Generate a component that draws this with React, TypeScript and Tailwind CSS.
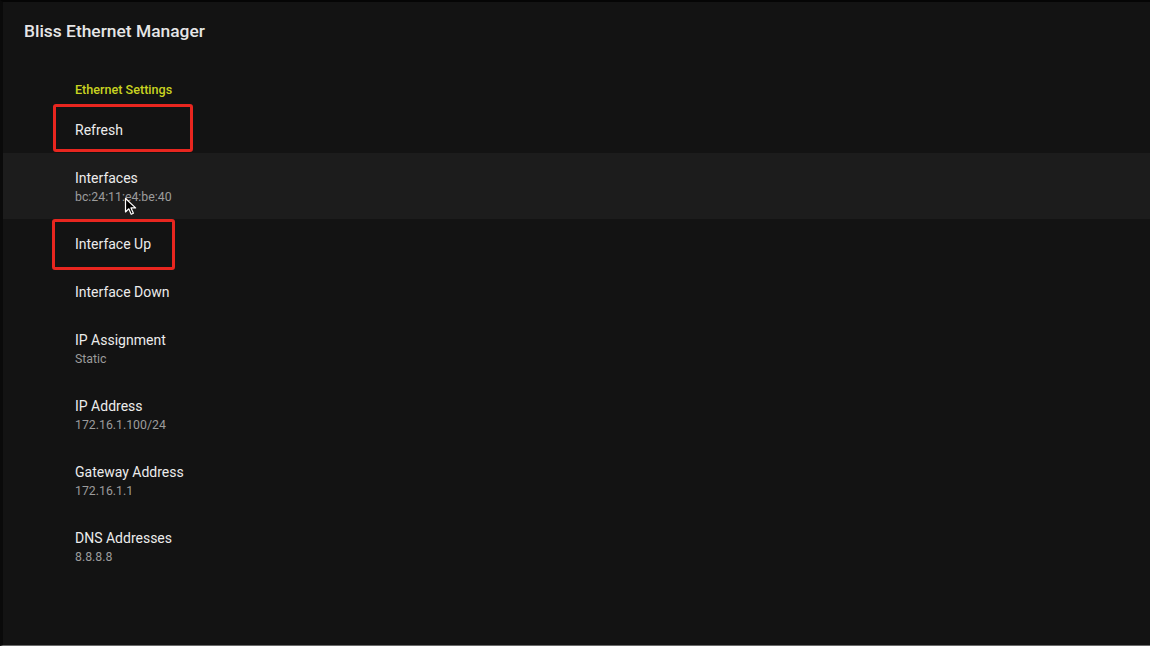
import React from 'react';

type Row = {
  title: string;
  subtitle?: string;
  highlight?: boolean;
  box?: 'refresh' | 'up';
};

const rows: Row[] = [
  { title: 'Refresh', box: 'refresh' },
  { title: 'Interfaces', subtitle: 'bc:24:11:e4:be:40', highlight: true },
  { title: 'Interface Up', box: 'up' },
  { title: 'Interface Down' },
  { title: 'IP Assignment', subtitle: 'Static' },
  { title: 'IP Address', subtitle: '172.16.1.100/24' },
  { title: 'Gateway Address', subtitle: '172.16.1.1' },
  { title: 'DNS Addresses', subtitle: '8.8.8.8' },
];

function Cursor() {
  return (
    <svg
      className="absolute left-[121px] top-[195px]"
      width="14"
      height="19"
      viewBox="0 0 14 19"
    >
      <path
        d="M1.5 1.5 L1.5 15 L4.8 11.8 L7.2 17.3 L9.4 16.3 L7 10.9 L11.6 10.9 Z"
        fill="#000"
        stroke="#fff"
        strokeWidth="1.2"
        strokeLinejoin="round"
      />
    </svg>
  );
}

function SettingRow({ row }: { row: Row }) {
  const height = row.subtitle ? 'h-[66px]' : 'h-[48px]';
  return (
    <div
      className={`relative flex flex-col justify-center pl-[72px] pt-[1px] ${height} ${
        row.highlight ? 'bg-[#1c1c1c]' : ''
      }`}
    >
      <div className="text-[14px] leading-[18px] text-[#ececec]">{row.title}</div>
      {row.subtitle && (
        <div className="mt-[2px] text-[12.3px] leading-[16px] text-[#9c9c9c]">{row.subtitle}</div>
      )}
      {row.box === 'refresh' && (
        <div className="absolute left-[50px] top-[-1px] h-[48px] w-[140px] rounded-[3px] border-[3px] border-[#e8261f]" />
      )}
      {row.box === 'up' && (
        <div className="absolute left-[49px] top-0 h-[51px] w-[123px] rounded-[3px] border-[3px] border-[#e8261f]" />
      )}
    </div>
  );
}

export default function App() {
  return (
    <div
      className="relative h-[646px] w-[1150px] overflow-hidden border-t-2 border-b border-l-[3px] border-t-[#050505] border-b-[#6a6a6a] border-l-[#0a0a0a] bg-[#131313]"
      style={{ fontFamily: 'Roboto, "Liberation Sans", sans-serif' }}
    >
      <div className="pl-[21px] pt-[17px] text-[17.4px] font-medium leading-[24px] text-[#e6e6e6]">
        Bliss Ethernet Manager
      </div>
      <div className="mt-[39px] pl-[72px] text-[12.6px] font-medium leading-[16px] text-[#c9d421]">
        Ethernet Settings
      </div>
      <div className="mt-[7px]">
        {rows.map((row) => (
          <SettingRow key={row.title} row={row} />
        ))}
      </div>
      <Cursor />
    </div>
  );
}
